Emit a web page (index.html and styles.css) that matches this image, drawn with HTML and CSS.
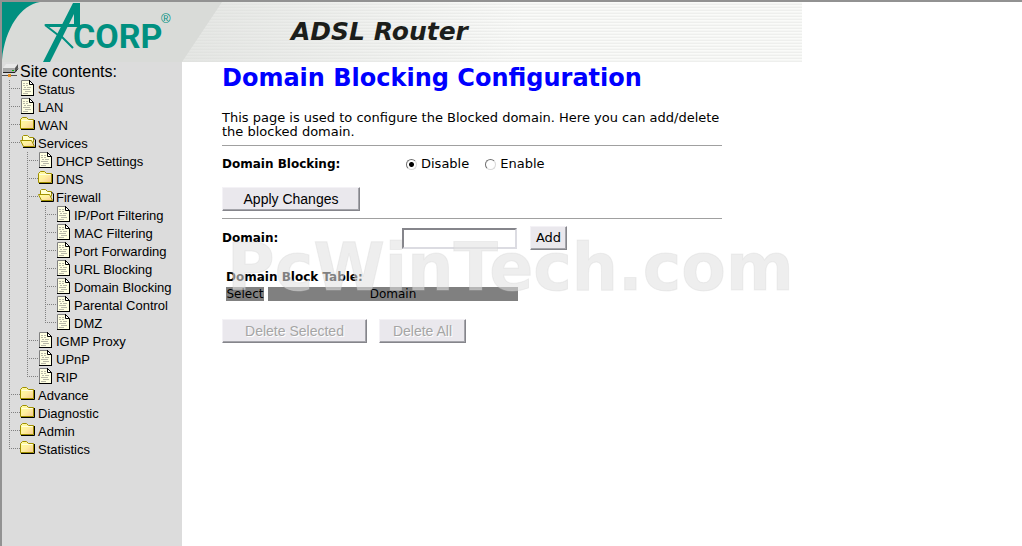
FILE: index.html
```html
<!DOCTYPE html>
<html lang="en">
<head>
<meta charset="utf-8">
<title>ADSL Router</title>
<link rel="stylesheet" href="styles.css">
</head>
<body>
<svg class="defs" width="0" height="0" aria-hidden="true">
  <defs>
    <linearGradient id="paper" x1="0" y1="0" x2="1" y2="1">
      <stop offset="0" stop-color="#ffff9c"/><stop offset=".5" stop-color="#fff0a0"/><stop offset="1" stop-color="#f7c890"/>
    </linearGradient>
    <symbol id="doc" viewBox="0 0 16 18">
      <path d="M1.5.5h8l4 4v11h-12z" fill="#ffffe1" stroke="#808080"/>
      <path d="M9.5 0v4.500h4" fill="#fff" stroke="#000"/>
      <path d="M9.500.5l4 4v11.500M1 15.500h13" fill="none" stroke="#000"/>
      <path d="M3 3.500h2m1 0h2M3 5.500h2m1 0h2M4 7.500h2m1 0h4M3 9.500h7M5 11.500h6M3 13.500h5" stroke="#b8b8a8"/>
    </symbol>
    <symbol id="folder" viewBox="0 0 16 18">
      <path d="M.5 3.500l2-2h4l2 2h5v9h-13z" fill="url(#paper)" stroke="#a09000"/>
      <path d="M1.500 4.500h11" stroke="#ffffe1"/>
      <path d="M1 13.500h13.500V4" fill="none" stroke="#000"/>
    </symbol>
    <symbol id="open" viewBox="0 0 16 18">
      <path d="M2.500 9V2.500l1-1h4l2 2h4v5" fill="#ffffd0" stroke="#a09000"/>
      <path d="M.5 6.500h11l3 6h-11z" fill="url(#paper)" stroke="#a09000"/>
      <path d="M3 13.500h12.500V6l-2-2" fill="none" stroke="#000"/>
    </symbol>
  </defs>
</svg>
<div class="frame">
  <header class="banner">
    <svg class="logo" viewBox="0 0 220 60" role="img" aria-label="Acorp">
      <path d="M0 0H220L180 60H0Z" fill="#d9dbd8"/>
      <path d="M0 0H38C19 3 3 26 0 58Z" fill="#009080"/>
      <path d="M71 1h7v24h-6V12L48 60H41Z" fill="#009080"/>
      <path d="M42 22H77V25H47Z" fill="#009080"/>
      <path d="M43 23L56 33M57 32L71 46" fill="none" stroke="#009080" stroke-width="2"/>
      <text class="wordmark" x="71" y="46">CORP</text>
      <text class="registered" x="159" y="21">®</text>
    </svg>
    <div class="product">ADSL Router</div>
  </header>
  <div class="columns">
    <nav class="sidebar">
      <div class="site"><svg class="drive" viewBox="0 0 18 18">
        <path d="M4 2h12l-3 4H1z" fill="#e8e8e8"/><path d="M1 6h12v4H1z" fill="#a8a8a8"/><path d="M13 6l3-4v4l-3 4z" fill="#555"/>
        <path d="M1 10.500h12l3-4" fill="none" stroke="#222"/><path d="M10 8.500h2" stroke="#00c000"/>
        <path d="M0 13.500h15" stroke="#555"/><path d="M6 12h3v3H6z" fill="#e89020"/>
      </svg><span>Site contents:</span></div>
      <ul class="tree">
        <li><a href="#"><svg><use href="#doc"/></svg><span>Status</span></a></li>
        <li><a href="#"><svg><use href="#doc"/></svg><span>LAN</span></a></li>
        <li><a href="#"><svg><use href="#folder"/></svg><span>WAN</span></a></li>
        <li><a href="#"><svg><use href="#open"/></svg><span>Services</span></a>
          <ul class="tree">
            <li><a href="#"><svg><use href="#doc"/></svg><span>DHCP Settings</span></a></li>
            <li><a href="#"><svg><use href="#folder"/></svg><span>DNS</span></a></li>
            <li><a href="#"><svg><use href="#open"/></svg><span>Firewall</span></a>
              <ul class="tree">
                <li><a href="#"><svg><use href="#doc"/></svg><span>IP/Port Filtering</span></a></li>
                <li><a href="#"><svg><use href="#doc"/></svg><span>MAC Filtering</span></a></li>
                <li><a href="#"><svg><use href="#doc"/></svg><span>Port Forwarding</span></a></li>
                <li><a href="#"><svg><use href="#doc"/></svg><span>URL Blocking</span></a></li>
                <li><a href="#"><svg><use href="#doc"/></svg><span>Domain Blocking</span></a></li>
                <li><a href="#"><svg><use href="#doc"/></svg><span>Parental Control</span></a></li>
                <li><a href="#"><svg><use href="#doc"/></svg><span>DMZ</span></a></li>
              </ul>
            </li>
            <li><a href="#"><svg><use href="#doc"/></svg><span>IGMP Proxy</span></a></li>
            <li><a href="#"><svg><use href="#doc"/></svg><span>UPnP</span></a></li>
            <li><a href="#"><svg><use href="#doc"/></svg><span>RIP</span></a></li>
          </ul>
        </li>
        <li><a href="#"><svg><use href="#folder"/></svg><span>Advance</span></a></li>
        <li><a href="#"><svg><use href="#folder"/></svg><span>Diagnostic</span></a></li>
        <li><a href="#"><svg><use href="#folder"/></svg><span>Admin</span></a></li>
        <li><a href="#"><svg><use href="#folder"/></svg><span>Statistics</span></a></li>
      </ul>
    </nav>
    <main class="content">
      <h1>Domain Blocking Configuration</h1>
      <form class="form">
        <p class="intro">This page is used to configure the Blocked domain. Here you can add/delete the blocked domain.</p>
        <hr>
        <div class="field modes" role="radiogroup" aria-labelledby="mode-label">
          <span class="label" id="mode-label">Domain Blocking:</span>
          <label class="choice"><input type="radio" name="mode" checked>Disable</label>
          <label class="choice"><input type="radio" name="mode">Enable</label>
        </div>
        <button class="button apply" type="button">Apply Changes</button>
        <hr>
        <div class="field domain">
          <label class="label" for="domain">Domain:</label>
          <input class="textbox" id="domain" type="text">
          <button class="button add" type="button">Add</button>
        </div>
        <table class="blocked">
          <caption>Domain Block Table:</caption>
          <thead><tr><th class="pick">Select</th><th class="name">Domain</th></tr></thead>
        </table>
        <div class="actions">
          <button class="button selected" type="button" disabled>Delete Selected</button>
          <button class="button all" type="button" disabled>Delete All</button>
        </div>
      </form>
      <div class="watermark">PcWinTech.com</div>
    </main>
  </div>
</div>
</body>
</html>
```
FILE: styles.css
```css
* { box-sizing: border-box; }
body { margin: 0; background: #fff; color: #000; font: 13px/14px "DejaVu Sans", Verdana, sans-serif; }
.defs { display: block; }
.frame {
  display: flex; flex-direction: column; min-height: 100vh;
  border-top: 2px solid #929292; border-left: 2px solid #929292;
}
.banner {
  display: flex; align-items: center; max-width: 800px; height: 60px;
  background:
    linear-gradient(90deg, rgba(215,217,214,.6) 180px, rgba(255,255,255,0) 520px),
    repeating-linear-gradient(#fafbf9 0 1px, #f5f6f4 1px 2px, #eeefed 2px 3px);
}
.logo { flex: none; width: 220px; height: 60px; }
.wordmark { font: 700 34px Roboto, sans-serif; fill: #009080; }
.registered { font: 13px "Liberation Sans", Arial, sans-serif; fill: #009080; }
.product { padding-left: 69px; font: italic 700 25px/60px "DejaVu Sans", sans-serif; color: #1c1e1b; white-space: nowrap; }
.columns { display: flex; flex: 1; }
.sidebar { flex: none; width: 180px; background: #dcdcdc; font: 13px/18px "Liberation Sans", Arial, sans-serif; }
.site { display: flex; height: 18px; font-size: 16px; white-space: nowrap; }
.drive { width: 18px; height: 18px; }
.site span, .tree span { padding-top: 1px; }
.tree { margin: 0; padding: 0; list-style: none; }
.tree li {
  padding-left: 18px;
  background:
    repeating-linear-gradient(#808080 0 1px, transparent 1px 2px) 7px 0 / 1px 100% no-repeat,
    repeating-linear-gradient(90deg, #808080 0 1px, transparent 1px 2px) 7px 8px / 11px 1px no-repeat;
}
.tree li:last-child { background-size: 1px 9px, 11px 1px; }
.tree a { display: flex; gap: 2px; height: 18px; color: #000; text-decoration: none; white-space: nowrap; }
.tree svg { flex: none; width: 16px; height: 18px; }
.content { position: relative; flex: 1; min-width: 0; padding: 0 40px; }
h1 { margin: 0; font-size: 24px; line-height: 32px; color: #00f; }
.form { max-width: 500px; }
.intro { margin: 17px 0 6px; }
hr { height: 1px; margin: 0; border: 0; background: #a0a0a0; }
.label { flex: none; width: 180px; font-size: 12px; font-weight: 700; }
.field { display: flex; align-items: center; }
.modes { gap: 0 16px; height: 36px; }
.modes .label { width: 168px; }
.choice { display: flex; align-items: center; gap: 4px; }
.choice input {
  appearance: none; width: 11px; height: 11px; margin: 0; border: 1px solid; border-radius: 50%;
  border-color: #707070 #d8d8d8 #d8d8d8 #707070; background: #fff;
}
.choice input:checked { background: radial-gradient(circle, #000 0 2px, #fff 3px); }
.button {
  padding: 0; height: 24px; border: 1px solid; border-color: #f4f2f6 #85858b #85858b #f4f2f6;
  box-shadow: inset -1px -1px #a5a5ab; background: #eae8ed; color: #000;
  font: 14px/20px "Liberation Sans", Arial, sans-serif;
}
.button:disabled { color: #a5a5a5; text-shadow: 1px 1px #fff; }
.apply { display: block; width: 138px; margin: 5px 0 7px; }
.domain { height: 38px; }
.textbox { width: 115px; height: 21px; padding: 1px 3px; border: 2px solid; border-color: #85858b #dcdce2 #dcdce2 #85858b; background: #fff; font: inherit; }
.add { width: 37px; margin-left: 13px; font: 13px/20px "DejaVu Sans", Verdana, sans-serif; }
.blocked { margin-top: 13px; border-spacing: 4px 0; }
.blocked caption { padding: 0 4px 3px; font-size: 12px; font-weight: 700; text-align: left; }
.blocked th { padding: 0; background: #808080; font-weight: 400; font-size: 12px; line-height: 14px; }
.pick { width: 38px; }
.name { width: 250px; }
.actions { display: flex; gap: 12px; margin-top: 18px; }
.selected { width: 145px; }
.all { width: 87px; }
.watermark {
  position: absolute; left: 45px; top: 168px; pointer-events: none; white-space: nowrap;
  font: 700 65px/76px "DejaVu Sans", sans-serif; color: rgba(225,225,225,.57);
  -webkit-text-stroke: 1px rgba(210,210,210,.3);
}
```
